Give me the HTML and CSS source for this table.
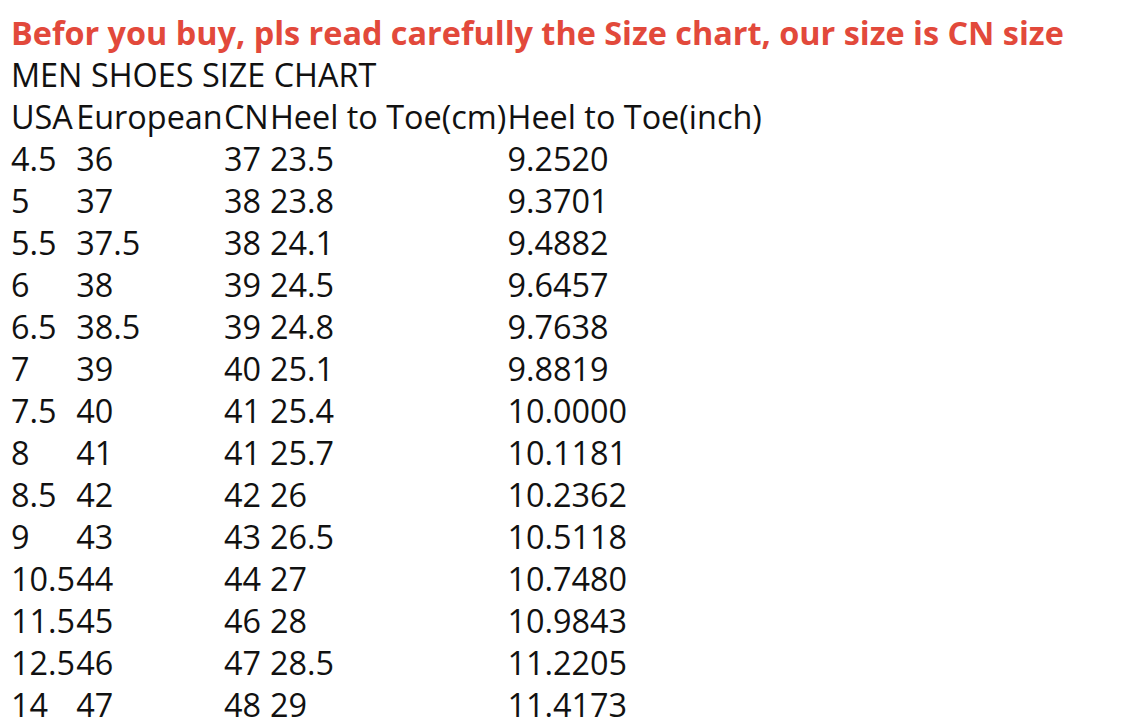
FILE: index.html
```html
<!DOCTYPE html>
<html>
<head>
<meta charset="utf-8">
<link rel="stylesheet" href="styles.css">
</head>
<body>
<div class="page">
<p class="notice">Befor you buy, pls read carefully the Size chart, our size is CN size</p>
<p class="title">MEN SHOES SIZE CHART</p>
<table class="chart">
<tr><td>USA</td><td>European</td><td>CN</td><td>Heel to Toe(cm)</td><td>Heel to Toe(inch)</td></tr>
<tr><td>4.5</td><td>36</td><td>37</td><td>23.5</td><td>9.2520</td></tr>
<tr><td>5</td><td>37</td><td>38</td><td>23.8</td><td>9.3701</td></tr>
<tr><td>5.5</td><td>37.5</td><td>38</td><td>24.1</td><td>9.4882</td></tr>
<tr><td>6</td><td>38</td><td>39</td><td>24.5</td><td>9.6457</td></tr>
<tr><td>6.5</td><td>38.5</td><td>39</td><td>24.8</td><td>9.7638</td></tr>
<tr><td>7</td><td>39</td><td>40</td><td>25.1</td><td>9.8819</td></tr>
<tr><td>7.5</td><td>40</td><td>41</td><td>25.4</td><td>10.0000</td></tr>
<tr><td>8</td><td>41</td><td>41</td><td>25.7</td><td>10.1181</td></tr>
<tr><td>8.5</td><td>42</td><td>42</td><td>26</td><td>10.2362</td></tr>
<tr><td>9</td><td>43</td><td>43</td><td>26.5</td><td>10.5118</td></tr>
<tr><td>10.5</td><td>44</td><td>44</td><td>27</td><td>10.7480</td></tr>
<tr><td>11.5</td><td>45</td><td>46</td><td>28</td><td>10.9843</td></tr>
<tr><td>12.5</td><td>46</td><td>47</td><td>28.5</td><td>11.2205</td></tr>
<tr><td>14</td><td>47</td><td>48</td><td>29</td><td>11.4173</td></tr>
</table>
</div>
</body>
</html>
```
FILE: styles.css
```css
body {
  margin: 0;
  background: #ffffff;
  font-family: "Open Sans", "Liberation Sans", sans-serif;
  font-size: 32.4px;
  color: #111111;
}
.page {
  padding: 11px 0 0 10.4px;
}
.notice {
  margin: 0;
  font-weight: 700;
  color: #e2493b;
  line-height: 42px;
  padding-left: 0.6px;
}
.title {
  margin: 0;
  line-height: 42px;
  padding-left: 0.6px;
}
.chart {
  border-collapse: separate;
  border-spacing: 0;
  font-size: 32.4px;
}
.chart td {
  padding: 0 0.6px;
  height: 42px;
  line-height: 42px;
  vertical-align: middle;
  white-space: nowrap;
}
```
